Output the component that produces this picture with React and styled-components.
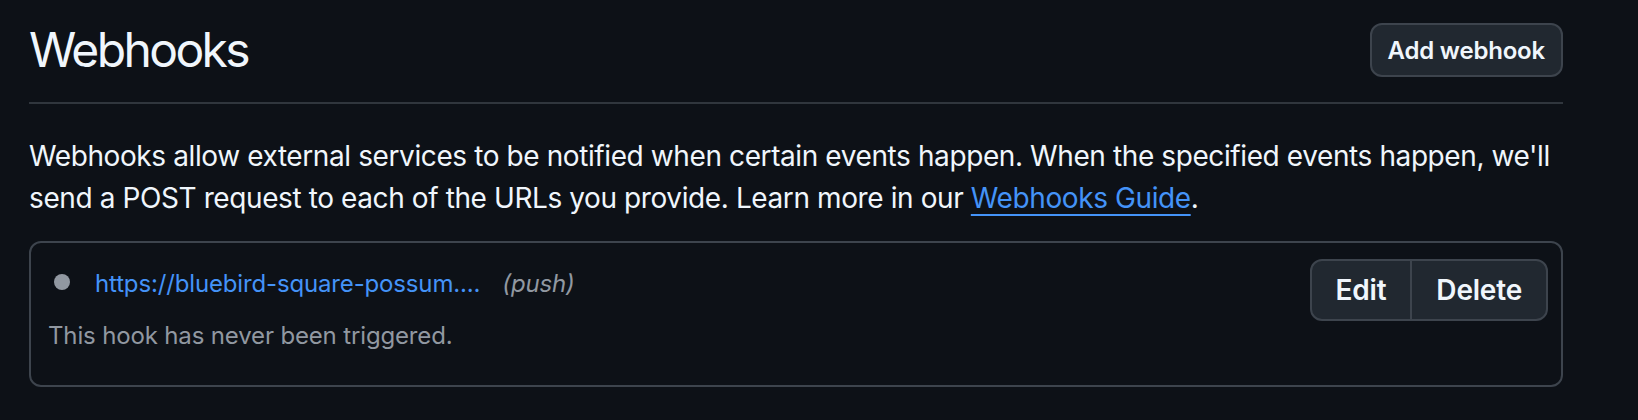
import React from 'react';
import styled, { createGlobalStyle } from 'styled-components';

const GlobalStyle = createGlobalStyle`
  html, body {
    margin: 0;
    padding: 0;
    background: #0d1117;
  }
  body {
    font-family: Inter, "Noto Sans", "Liberation Sans", sans-serif;
    color: #f0f6fc;
  }
`;

const Page = styled.main`
  width: 1534px;
  padding: 0 0 0 29px;
`;

const Subhead = styled.header`
  display: flex;
  align-items: center;
  justify-content: space-between;
  padding: 23px 0 25px;
  border-bottom: 2px solid #30363d;
`;

const Heading = styled.h2`
  margin: 0;
  font-size: 48px;
  font-weight: 400;
  line-height: 54px;
  letter-spacing: -2.6px;
  color: #f0f6fc;
`;

const Button = styled.button`
  display: inline-flex;
  align-items: center;
  justify-content: center;
  height: ${(p) => p.$height || 54}px;
  padding: 0 ${(p) => p.$pad || 16}px;
  font-family: inherit;
  font-size: ${(p) => p.$size || 24}px;
  font-weight: 600;
  letter-spacing: -0.2px;
  color: #f0f6fc;
  background: #212830;
  border: 2px solid #3d444d;
  border-radius: 12px;
  cursor: pointer;
`;

const Intro = styled.p`
  margin: 31px 0 22px;
  font-size: 28px;
  line-height: 42px;
  letter-spacing: -0.4px;
  color: #f0f6fc;
`;

const Link = styled.a`
  color: #4493f8;
  text-decoration: underline;
  text-underline-offset: 6px;
  text-decoration-thickness: 2px;
`;

const HookList = styled.section`
  border: 2px solid #3d444d;
  border-radius: 12px;
`;

const HookItem = styled.div`
  display: flex;
  justify-content: space-between;
  align-items: flex-start;
  padding: 16px 13px 16px 16px;
`;

const HookInfo = styled.div`
  display: flex;
  flex-direction: column;
  padding-top: 5px;
`;

const HookRow = styled.div`
  display: flex;
  align-items: center;
  font-size: 24px;
  line-height: 39px;
  letter-spacing: -0.15px;
`;

const StatusDot = styled.span`
  width: 16px;
  height: 16px;
  margin: 0 25px 0 7px;
  border-radius: 50%;
  background: #9198a1;
  position: relative;
  top: -2px;
`;

const HookUrl = styled.a`
  color: #4493f8;
  text-decoration: none;
`;

const Events = styled.em`
  margin-left: 22px;
  color: #9198a1;
`;

const HookMeta = styled.p`
  margin: 13px 0 14px 1px;
  font-size: 24px;
  line-height: 39px;
  letter-spacing: -0.15px;
  color: #9198a1;
`;

const ButtonGroup = styled.div`
  display: flex;
  & > button:first-child {
    border-top-right-radius: 0;
    border-bottom-right-radius: 0;
  }
  & > button:last-child {
    margin-left: -2px;
    border-top-left-radius: 0;
    border-bottom-left-radius: 0;
  }
`;

export default function App() {
  return (
    <>
      <GlobalStyle />
      <Page>
        <Subhead>
          <Heading>Webhooks</Heading>
          <Button>Add webhook</Button>
        </Subhead>
        <Intro>
          Webhooks allow external services to be notified when certain events happen. When the specified events happen, we'll
          send a POST request to each of the URLs you provide. Learn more in our <Link href="#">Webhooks Guide</Link>.
        </Intro>
        <HookList>
          <HookItem>
            <HookInfo>
              <HookRow>
                <StatusDot />
                <HookUrl href="#">https://bluebird-square-possum....</HookUrl>
                <Events>(push)</Events>
              </HookRow>
              <HookMeta>This hook has never been triggered.</HookMeta>
            </HookInfo>
            <ButtonGroup>
              <Button $height={62} $pad={24} $size={28}>Edit</Button>
              <Button $height={62} $pad={24} $size={28}>Delete</Button>
            </ButtonGroup>
          </HookItem>
        </HookList>
      </Page>
    </>
  );
}
